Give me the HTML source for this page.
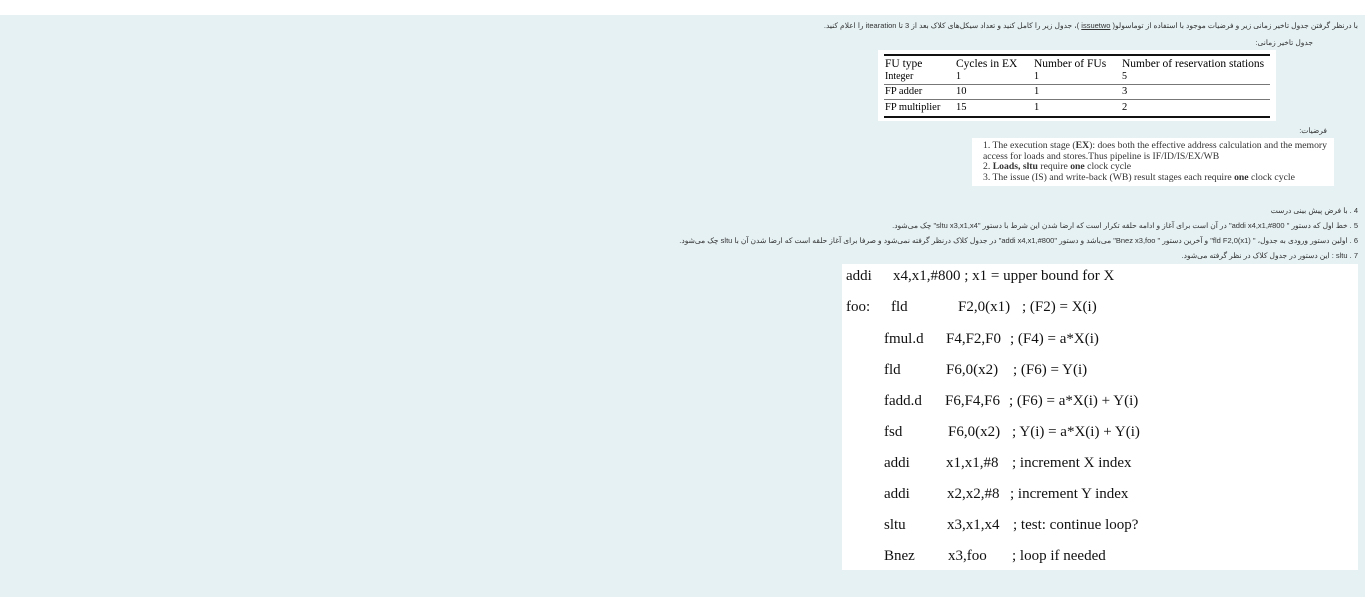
<!DOCTYPE html>
<html><head><meta charset="utf-8"><style>
body{margin:0;width:1365px;height:615px;background:#fff;position:relative;overflow:hidden;font-family:"Liberation Sans","Noto Sans CJK SC",sans-serif}
.bg{position:absolute;left:0;top:15px;width:1365px;height:582px;background:#e6f1f3}
.a{position:absolute;white-space:nowrap}
.fa{font-size:7.5px;color:#333;direction:rtl}
.box{position:absolute;background:#fff}
.s{font-family:"Liberation Serif",serif}
.c{position:absolute;font-family:"Liberation Serif",serif;font-size:15px;color:#111;white-space:nowrap}
</style></head><body>
<div class="bg"></div>
<div class="a fa" style="right:7px;top:21px">با درنظر گرفتن جدول تاخیر زمانی زیر و فرضیات موجود با استفاده از توماسولو( <u>issuetwo</u> )، جدول زیر را کامل کنید و تعداد سیکل‌های کلاک بعد از 3 تا itearation را اعلام کنید.</div>
<div class="a fa" style="right:52px;top:38px">جدول تاخیر زمانی:</div>
<div class="box" style="left:878px;top:50px;width:398px;height:71px"></div>
<div class="a s" style="left:884px;top:54px;width:386px;border-top:2px solid #111"></div>
<div class="a s" style="left:884px;top:84px;width:386px;border-top:1px solid #777"></div>
<div class="a s" style="left:884px;top:99px;width:386px;border-top:1px solid #777"></div>
<div class="a s" style="left:884px;top:116px;width:386px;border-top:2px solid #111"></div>
<div class="a s" style="left:885px;top:58px;font-size:11.5px;line-height:12px">FU type<br><span style="font-size:10px">Integer</span></div>
<div class="a s" style="left:956px;top:58px;font-size:11.5px;line-height:12px">Cycles in EX<br><span style="font-size:10px">1</span></div>
<div class="a s" style="left:1034px;top:58px;font-size:11.5px;line-height:12px">Number of FUs<br><span style="font-size:10px">1</span></div>
<div class="a s" style="left:1122px;top:58px;font-size:11.5px;line-height:12px">Number of reservation stations<br><span style="font-size:10px">5</span></div>
<div class="a s" style="left:885px;top:86px;font-size:10.5px">FP adder</div>
<div class="a s" style="left:956px;top:86px;font-size:10.5px">10</div>
<div class="a s" style="left:1034px;top:86px;font-size:10.5px">1</div>
<div class="a s" style="left:1122px;top:86px;font-size:10.5px">3</div>
<div class="a s" style="left:885px;top:102px;font-size:10.5px">FP multiplier</div>
<div class="a s" style="left:956px;top:102px;font-size:10.5px">15</div>
<div class="a s" style="left:1034px;top:102px;font-size:10.5px">1</div>
<div class="a s" style="left:1122px;top:102px;font-size:10.5px">2</div>
<div class="a fa" style="right:38px;top:126px">فرضیات:</div>
<div class="box" style="left:972px;top:138px;width:362px;height:48px"></div>
<div class="a s" style="left:983px;top:141px;font-size:9.7px;line-height:10.5px;color:#333">1. The execution stage (<b>EX</b>): does both the effective address calculation and the memory<br>access for loads and stores.Thus pipeline is IF/ID/IS/EX/WB<br>2. <b>Loads, sltu</b> require <b>one</b> clock cycle<br>3. The issue (IS) and write-back (WB) result stages each require <b>one</b> clock cycle</div>
<div class="a fa" style="right:7px;top:206px">4 . با فرض پیش بینی درست</div>
<div class="a fa" style="right:7px;top:221px">5 . خط اول که دستور " addi x4,x1,#800" در آن است برای آغاز و ادامه حلقه تکرار است که ارضا شدن این شرط با دستور "sltu x3,x1,x4" چک می‌شود.</div>
<div class="a fa" style="right:7px;top:236px">6 . اولین دستور ورودی به جدول، " fld F2,0(x1)" و آخرین دستور " Bnez x3,foo" می‌باشد و دستور "addi x4,x1,#800" در جدول کلاک درنظر گرفته نمی‌شود و صرفا برای آغاز حلقه است که ارضا شدن آن با sltu چک می‌شود.</div>
<div class="a fa" style="right:7px;top:251px">7 . sltu : این دستور در جدول کلاک در نظر گرفته می‌شود.</div>
<div class="box" style="left:842px;top:264px;width:516px;height:306px"></div>
<div class="c" style="left:846px;top:268px">addi</div><div class="c" style="left:893px;top:268px">x4,x1,#800 ; x1 = upper bound for X</div>
<div class="c" style="left:846px;top:299px">foo:</div><div class="c" style="left:891px;top:299px">fld</div><div class="c" style="left:958px;top:299px">F2,0(x1)</div><div class="c" style="left:1022px;top:299px">; (F2) = X(i)</div>
<div class="c" style="left:884px;top:331px">fmul.d</div><div class="c" style="left:946px;top:331px">F4,F2,F0</div><div class="c" style="left:1010px;top:331px">; (F4) = a*X(i)</div>
<div class="c" style="left:884px;top:362px">fld</div><div class="c" style="left:946px;top:362px">F6,0(x2)</div><div class="c" style="left:1013px;top:362px">; (F6) = Y(i)</div>
<div class="c" style="left:884px;top:393px">fadd.d</div><div class="c" style="left:945px;top:393px">F6,F4,F6</div><div class="c" style="left:1009px;top:393px">; (F6) = a*X(i) + Y(i)</div>
<div class="c" style="left:884px;top:424px">fsd</div><div class="c" style="left:948px;top:424px">F6,0(x2)</div><div class="c" style="left:1012px;top:424px">; Y(i) = a*X(i) + Y(i)</div>
<div class="c" style="left:884px;top:455px">addi</div><div class="c" style="left:946px;top:455px">x1,x1,#8</div><div class="c" style="left:1012px;top:455px">; increment X index</div>
<div class="c" style="left:884px;top:486px">addi</div><div class="c" style="left:947px;top:486px">x2,x2,#8</div><div class="c" style="left:1010px;top:486px">; increment Y index</div>
<div class="c" style="left:884px;top:517px">sltu</div><div class="c" style="left:947px;top:517px">x3,x1,x4</div><div class="c" style="left:1013px;top:517px">; test: continue loop?</div>
<div class="c" style="left:884px;top:548px">Bnez</div><div class="c" style="left:948px;top:548px">x3,foo</div><div class="c" style="left:1012px;top:548px">; loop if needed</div>
</body></html>
